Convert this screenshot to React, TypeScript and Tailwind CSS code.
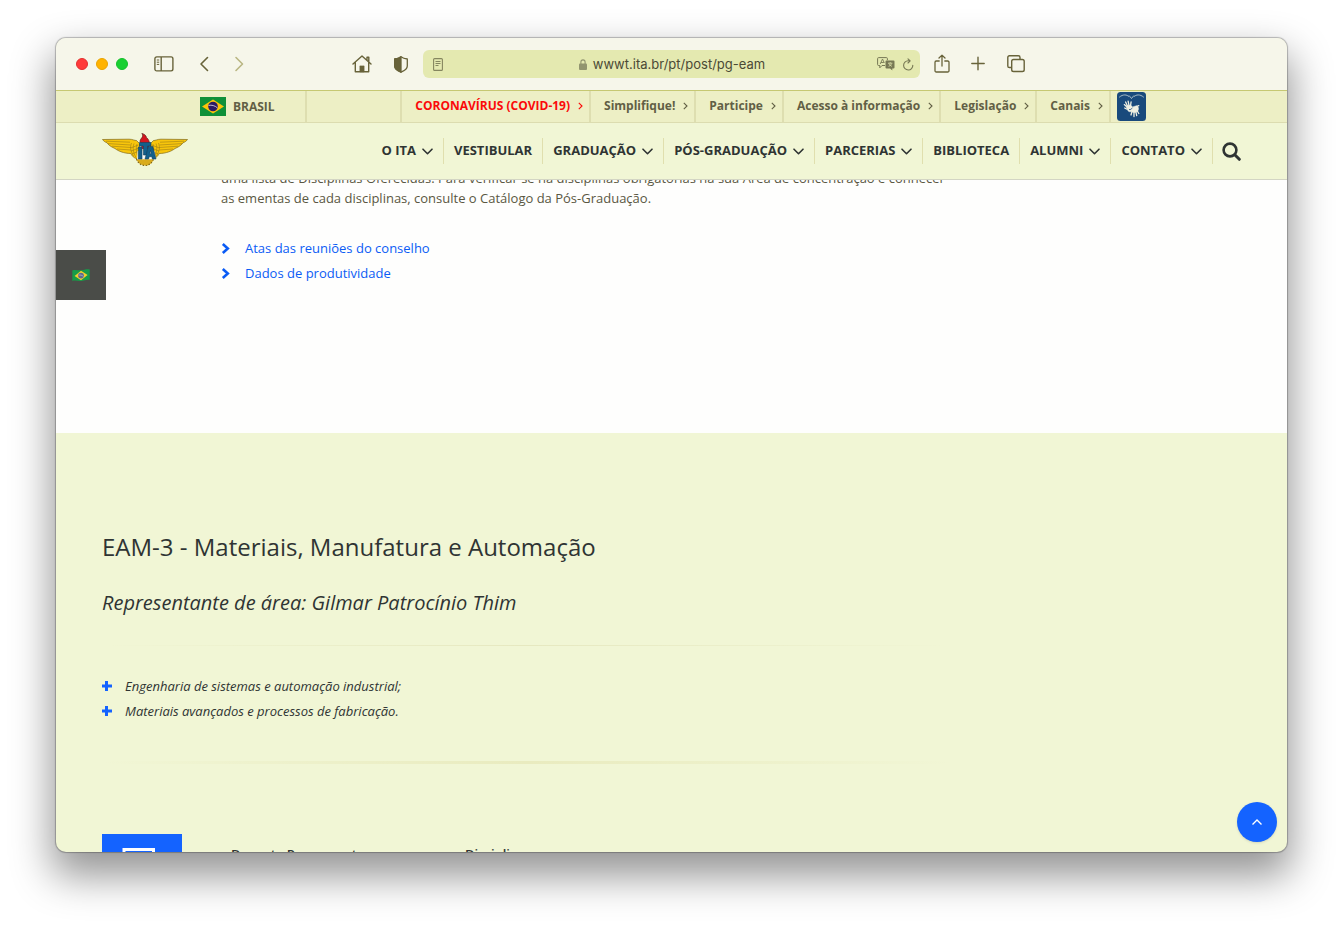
import React from "react";

const govLinks = ["Simplifique!", "Participe", "Acesso à informação", "Legislação", "Canais"];

const navItems = [
  { label: "O ITA", menu: true },
  { label: "VESTIBULAR", menu: false },
  { label: "GRADUAÇÃO", menu: true },
  { label: "PÓS-GRADUAÇÃO", menu: true },
  { label: "PARCERIAS", menu: true },
  { label: "BIBLIOTECA", menu: false },
  { label: "ALUMNI", menu: true },
  { label: "CONTATO", menu: true },
];

function GovChevron() {
  return (
    <svg width="5" height="8" viewBox="0 0 5 8" fill="none" stroke="currentColor" strokeWidth="1.1" aria-hidden="true">
      <path d="M0.8 0.8 4 4 0.8 7.2" />
    </svg>
  );
}

function DownChevron() {
  return (
    <svg width="11" height="7" viewBox="0 0 11 7" fill="none" stroke="currentColor" strokeWidth="1.6" strokeLinecap="round" strokeLinejoin="round" aria-hidden="true">
      <path d="M1 1.2 5.5 5.7 10 1.2" />
    </svg>
  );
}

function BrazilFlag() {
  return (
    <svg width="26" height="19" viewBox="0 0 26 19" aria-hidden="true">
      <rect width="26" height="19" fill="#0f9038" />
      <path d="M13 2.5 24 9.5 13 16.5 2 9.5Z" fill="#fdc30a" />
      <circle cx="13" cy="9.5" r="4.8" fill="#2c1a63" />
      <path d="M8.6 8.4c3-.6 6.400 .2 8.700 2.400" stroke="#cfcbe0" strokeWidth="0.9" fill="none" />
    </svg>
  );
}

function WavingFlag() {
  return (
    <svg width="18" height="13" viewBox="0 0 18 13" aria-hidden="true">
      <path d="M0.3 1.5C3 .3 5.500 1.600 9 1.300S14.500 -.2 17.700 .6V11C15 10.300 12.500 11.900 9 12S3 11 .3 12Z" fill="#169c48" />
      <path d="M9 1.800 15.600 6 9 11.200 2.600 7Z" fill="#f3cf2c" />
      <circle cx="9" cy="6.600" r="2.900" fill="#5d6a90" />
      <path d="M6.600 6.200c1.600-.5 3.500 0 4.700 1.200" stroke="#c8cede" strokeWidth="0.6" fill="none" />
    </svg>
  );
}

function WingPair() {
  return (
    <g>
      <path d="M.5 6.500 27 6.200c4 0 5.500 1.500 7.500 1.300l3 3v15c-4 .8-7-1.500-8.700-5C22 20.500 16 18 13 15.500 9 14 6 11.500 5 9.800 3 9 1.500 8 .5 6.500Z" fill="#f8c50b" stroke="#80681a" strokeWidth="0.7" />
      <path d="M4 8.200 28 9.200M6 10.600 28.500 12M10 13.200 29 14.500M15 16 29 17M29.500 10c-1.500 4-1 8 2 13M32 10.500c-1.500 4-1 9 2 14M35 11c-1.200 5-.8 10 1.500 14M28.500 15l8-3M29 18l8-3M30 21l7-3" fill="none" stroke="#8a701a" strokeWidth="0.5" />
    </g>
  );
}

function ItaLogo() {
  return (
    <svg width="86" height="34" viewBox="0 0 86 34" role="img" aria-label="ITA">
      <path d="M33.500 24.500c2 5.500 5 7.500 9.500 8s7.500-2.500 9.500-8Z" fill="#d9ab1c" />
      <path d="M34.500 26c1.500 4 4.500 6.500 8.500 6.500s7-2.500 8.500-6.500" fill="none" stroke="#80681a" strokeWidth="1.200" strokeDasharray="1.400 1.600" />
      <WingPair />
      <g transform="translate(86 0) scale(-1 1)">
        <WingPair />
      </g>
      <path d="M35.500 18h17l1.500 8.300h-19Z" fill="#f7fbf8" />
      <path d="M38.800 10.500c-2-3 .6-4.900 1.500-6.400C41 2.900 40.600 1.300 39.800 .4c3.200.8 4.400 2.500 4.600 4 .9.600 2.900 2.600 3.300 6.600Z" fill="#d3161e" stroke="#5b211c" strokeWidth="0.7" />
      <path d="M39.300 12.500h8v3.500h-8Z" fill="#b31f2b" />
      <path d="M37.500 9.500H49v3.500h-3.400v9h-4.200v-9h-3.900Z" fill="#12608c" stroke="#17405a" strokeWidth="0.6" />
      <path d="M36.300 14h3.700v12h-3.700Z" fill="#12608c" stroke="#17405a" strokeWidth="0.6" />
      <path fillRule="evenodd" d="M46.300 13.500h4.500L54 26h-3.600l-.6-2.300h-2.600l-.6 2.300H43ZM48.500 17.500l-.7 3.300h1.400Z" fill="#12608c" stroke="#17405a" strokeWidth="0.6" />
    </svg>
  );
}

function LibrasIcon() {
  return (
    <svg width="29" height="29" viewBox="0 0 29 29" aria-hidden="true">
      <rect width="29" height="29" rx="3.500" fill="#194a7c" />
      <g fill="none" stroke="#c9d5d6" strokeWidth="0.8" strokeLinecap="round">
        <path d="M2.500 5c3.500-3 7.500-2.500 9.300-.5M26.500 5c-3.500-3-7.500-2.500-9.300-.5M12.300 3.800l2.200 2.700 2.200-2.700" />
      </g>
      <g fill="#eff0e2" stroke="#eff0e2" strokeLinecap="round">
        <path d="M9.500 14.500c2-2 5-1.500 6 .5l4-1.300c2 .5 2.500 3 1.500 5-1.500 2-5 2.500-6.500.8-2.500 1.300-5-1.500-5-5Z" strokeWidth="0.5" />
        <path d="M10 15 7.300 12.600M10.500 14 8.600 10M12 13.500l-.9-4.300M13.500 14l.6-4.200M9.500 17l-1.800-1M15 19.500l-1 3.500M17 20v4.500M18.800 19.500l.9 4.200M20 18.500l1.800 3M19.500 14.500l2.300-.8" fill="none" strokeWidth="1.300" />
      </g>
      <path d="M12 17.500c1.500.5 2.500-.5 3.500-1.800" stroke="#194a7c" strokeWidth="0.8" fill="none" />
    </svg>
  );
}

function BrowserToolbar() {
  return (
    <div className="grid shrink-0 grid-cols-[1fr_minmax(200px,497px)_1fr] items-center border-b border-[#c6c872] bg-[#f6f6ea] pt-3 pb-3 text-[#68633a]">
      <div className="flex items-center justify-between pr-[14px] pl-5">
        <div className="flex items-center">
          <div className="flex gap-2">
            <button aria-label="Fechar" className="size-3 rounded-full border border-[#e3302f] bg-[#ff3b3a]" />
            <button aria-label="Minimizar" className="size-3 rounded-full border border-[#eaa400] bg-[#ffb300]" />
            <button aria-label="Ampliar" className="size-3 rounded-full border border-[#15c02c] bg-[#19d032]" />
          </div>
          <button aria-label="Barra lateral" className="ml-[26px]">
            <svg width="20" height="16" viewBox="0 0 20 16" fill="none" stroke="currentColor" strokeWidth="1.400">
              <rect x="0.900" y="0.900" width="18" height="14" rx="1.800" />
              <path d="M7.200 1v14" />
              <path d="M2.800 4h2.400M2.800 6.200h2.400M2.800 8.400h2.400" strokeWidth="1" />
            </svg>
          </button>
          <button aria-label="Voltar" className="ml-[25px]">
            <svg width="11" height="16" viewBox="0 0 11 16" fill="none" stroke="currentColor" strokeWidth="1.600" strokeLinecap="round" strokeLinejoin="round">
              <path d="M8.500 1.500 2 8l6.500 6.500" />
            </svg>
          </button>
          <button aria-label="Avançar" className="ml-6 text-[#b9b683]">
            <svg width="11" height="16" viewBox="0 0 11 16" fill="none" stroke="currentColor" strokeWidth="1.600" strokeLinecap="round" strokeLinejoin="round">
              <path d="M2 1.500 8.500 8 2 14.500" />
            </svg>
          </button>
        </div>
        <div className="flex items-center gap-[21px]">
          <button aria-label="Início">
            <svg width="20" height="18" viewBox="0 0 20 18" fill="none" stroke="currentColor" strokeWidth="1.400" strokeLinecap="round" strokeLinejoin="round">
              <path d="M1 9 10 .9 19 9M3.300 7.500v9.200h13.400V7.500M15 5V2.200h1.800V6.500" />
              <path d="M7.900 16.500v-5.600h4.200v5.600Z" fill="currentColor" strokeWidth="0.600" />
            </svg>
          </button>
          <button aria-label="Relatório de privacidade">
            <svg width="16" height="17" viewBox="0 0 16 17" fill="none" stroke="currentColor" strokeWidth="1.300" strokeLinejoin="round">
              <path d="M8 .8c1.800 1.400 4 2 6.300 2.200v7c0 2.800-3 4.800-6.300 6.200C4.700 14.800 1.700 12.800 1.700 10V3C4 2.800 6.200 2.200 8 .8Z" />
              <path d="M8 .8v15.400C4.700 14.800 1.700 12.800 1.700 10V3C4 2.800 6.200 2.200 8 .8Z" fill="currentColor" />
            </svg>
          </button>
        </div>
      </div>

      <div className="flex h-7 items-center rounded-md bg-[#e4e9b0] pr-[6px] pl-[10px] font-['Inter',sans-serif] text-[13px] text-[#4b4a35]">
        <svg width="10" height="13" viewBox="0 0 10 13" fill="none" stroke="#85865f" strokeWidth="1.100" aria-hidden="true">
          <rect x="0.600" y="0.600" width="8.800" height="11.800" rx="1" />
          <path d="M2.500 3.500h5M2.500 5.500h5M2.500 7.500h3" />
        </svg>
        <div className="flex flex-1 items-center justify-center gap-[6px] pt-px pl-6">
          <svg width="8" height="11" viewBox="0 0 8 11" aria-hidden="true">
            <path d="M1.900 5V3a2.100 2.100 0 0 1 4.200 0v2" fill="none" stroke="#92956f" strokeWidth="1.100" />
            <rect y="4.600" width="8" height="6.400" rx="1" fill="#92956f" />
          </svg>
          <span>wwwt.ita.br/pt/post/pg-eam</span>
        </div>
        <div className="flex items-center gap-2 text-[#777854]">
          <svg width="18" height="14" viewBox="0 0 18 14" fill="none" stroke="currentColor" aria-hidden="true">
            <path d="M8 8.500H5L2.800 10.800V8.500H1.600A1 1 0 0 1 .6 7.500V1.600a1 1 0 0 1 1-1h7.800a1 1 0 0 1 1 1v1.600" />
            <path d="M3.200 7 5.500 2l1.800 4M4 5.500h2.800" strokeWidth="0.900" />
            <path d="M9.500 3.600h7a1 1 0 0 1 1 1v5.800a1 1 0 0 1-1 1h-1.200v2.200l-2.200-2.200H9.500a1 1 0 0 1-1-1V4.600a1 1 0 0 1 1-1Z" fill="currentColor" stroke="none" />
            <path d="M11 6.200h4.400M13.200 5.200v1M12 6.700c.4 1.200 1.600 2 2.800 2.600M14.500 6.700c-.4 1.200-1.600 2-2.900 2.600" stroke="#e4e9b0" strokeWidth="0.800" />
          </svg>
          <button aria-label="Recarregar">
            <svg width="11" height="13" viewBox="0 0 11 13" fill="none" stroke="currentColor" strokeWidth="1.100" strokeLinecap="round" strokeLinejoin="round">
              <path d="M9.800 7.200A4.600 4.600 0 1 1 5.200 2.800h1.500M5 .8l2.200 2L5 5" />
            </svg>
          </button>
        </div>
      </div>

      <div className="flex items-center gap-5 pl-[14px]">
        <button aria-label="Compartilhar" className="pb-px">
          <svg width="16" height="20" viewBox="0 0 16 20" fill="none" stroke="currentColor" strokeWidth="1.300" strokeLinecap="round" strokeLinejoin="round">
            <path d="M5.200 7H2.200A1.200 1.200 0 0 0 1 8.200v8.600A1.200 1.200 0 0 0 2.200 18h11.600a1.200 1.200 0 0 0 1.200-1.200V8.200A1.200 1.200 0 0 0 13.800 7h-3M8 12V1.200M5 4l3-2.900L11 4" />
          </svg>
        </button>
        <button aria-label="Nova aba">
          <svg width="16" height="16" viewBox="0 0 16 16" fill="none" stroke="currentColor" strokeWidth="1.400" strokeLinecap="round">
            <path d="M8 1.300v12.400M1.800 7.500h12.400" />
          </svg>
        </button>
        <button aria-label="Visão geral das abas">
          <svg width="20" height="18" viewBox="0 0 20 18" fill="none" stroke="currentColor" strokeWidth="1.400" strokeLinejoin="round">
            <rect x="5.700" y="4.500" width="12.500" height="12" rx="1.800" />
            <path d="M5.500 12.500H3.400A1.600 1.600 0 0 1 1.800 10.900V2.400A1.600 1.600 0 0 1 3.400 .8h9a1.600 1.600 0 0 1 1.600 1.600v2" />
          </svg>
        </button>
      </div>
    </div>
  );
}

function GovernmentBar() {
  return (
    <div className="flex h-8 shrink-0 justify-between border-b border-[#dcdcb0] bg-[#edefc5] pr-[141px] pl-36 text-xs font-bold whitespace-nowrap text-[#625f45]">
      <a href="#brasil" className="flex items-center gap-[7px] border-r-2 border-[#dedeb0] pr-[30px]">
        <BrazilFlag />
        BRASIL
      </a>
      <div className="flex">
        <a href="#covid" className="flex items-center gap-2 border-l-2 border-[#dedeb0] pr-[6px] pb-[2px] pl-[13px] text-[#fb0a0a]">
          CORONAVÍRUS (COVID-19)
          <GovChevron />
        </a>
        {govLinks.map((label) => (
          <a key={label} href="#gov" className="flex items-center gap-2 border-l-2 border-[#dedeb0] pr-[6px] pb-[2px] pl-[13px]">
            {label}
            <GovChevron />
          </a>
        ))}
        <a href="#libras" aria-label="VLibras" className="flex items-center border-l-2 border-[#dedeb0] pl-[6px]">
          <LibrasIcon />
        </a>
      </div>
    </div>
  );
}

function SiteHeader() {
  return (
    <header className="z-10 flex h-[57px] shrink-0 items-center justify-between border-b border-[#d3d5c4] bg-[#f1f6d5] px-[46px] text-[#2f3433]">
      <a href="#inicio" className="pb-[2px]">
        <ItaLogo />
      </a>
      <nav className="flex items-center text-[13px] font-bold whitespace-nowrap">
        {navItems.map((item) => (
          <a key={item.label} href="#menu" className="flex h-[26px] items-center gap-[6px] border-r border-[#e0dfae] px-[10px]">
            {item.label}
            {item.menu && <DownChevron />}
          </a>
        ))}
        <button aria-label="Buscar" className="pl-[9px]">
          <svg width="19" height="19" viewBox="0 0 19 19" fill="none" stroke="currentColor" aria-hidden="true">
            <circle cx="8" cy="8" r="6.400" strokeWidth="2.600" />
            <path d="M12.800 12.800 17.300 17.300" strokeWidth="3" strokeLinecap="round" />
          </svg>
        </button>
      </nav>
    </header>
  );
}

function ListChevron() {
  return (
    <svg width="10" height="11" viewBox="0 0 10 11" fill="none" stroke="currentColor" strokeWidth="2.600" aria-hidden="true">
      <path d="M1.800 1 6.800 5.500 1.800 10" />
    </svg>
  );
}

function ListPlus() {
  return (
    <svg width="10" height="11" viewBox="0 0 10 11" fill="none" stroke="#1463ff" strokeWidth="3" aria-hidden="true">
      <path d="M4.500 0v10M0 5h10" />
    </svg>
  );
}

export default function App() {
  return (
    <div className="h-screen bg-white px-14 pt-[38px] pb-[74px] font-['Open_Sans',sans-serif]">
      <div className="relative flex h-full flex-col overflow-hidden rounded-[10px] bg-[#f1f6d5] shadow-[0_0_1px_1px_rgba(0,0,0,0.25),0_20px_40px_4px_rgba(0,0,0,0.42)]">
        <BrowserToolbar />
        <GovernmentBar />
        <SiteHeader />
        <main className="min-h-0 flex-1 overflow-hidden">
          <section className="bg-[#fefefd] pb-[147px] pl-[165px] text-[13px]">
            <p className="-mt-3 max-w-[740px] leading-5 text-[#5a5742]">
              uma lista de Disciplinas Oferecidas. Para verificar se há disciplinas obrigatórias na sua Área de concentração e conhecer
              as ementas de cada disciplinas, consulte o Catálogo da Pós-Graduação.
            </p>
            <ul className="pt-7 leading-[25px] text-[#0b5cf5]">
              {["Atas das reuniões do conselho", "Dados de produtividade"].map((label) => (
                <li key={label}>
                  <a href="#documento" className="flex items-center gap-[14px]">
                    <ListChevron />
                    {label}
                  </a>
                </li>
              ))}
            </ul>
          </section>

          <section className="px-[46px] pt-[98px] text-[#2f3433]">
            <div className="max-w-[850px]">
              <h2 className="text-2xl leading-8">EAM-3 - Materiais, Manufatura e Automação</h2>
              <h3 className="mt-6 text-xl leading-8 italic">Representante de área: Gilmar Patrocínio Thim</h3>
              <div className="mt-[26px] h-px bg-linear-to-r from-transparent via-[#e6e8c0] to-transparent" />
              <ul className="mt-7 text-[13px] leading-[25px] italic">
                {["Engenharia de sistemas e automação industrial;", "Materiais avançados e processos de fabricação."].map((label) => (
                  <li key={label} className="flex items-center gap-[13px]">
                    <ListPlus />
                    {label}
                  </li>
                ))}
              </ul>
              <div className="mt-[37px] h-[3px] bg-linear-to-r from-transparent via-[#e9ebbf] to-transparent" />
            </div>
            <div className="mt-[70px] flex items-start">
              <div className="flex size-20 items-start justify-center bg-[#1463ff] pt-[14px]">
                <svg width="46" height="46" viewBox="0 0 46 46" fill="none" stroke="#ffffff" strokeWidth="3" aria-hidden="true">
                  <path d="M5 40V1.500h29.500V40" />
                  <path d="M0 40h42" />
                </svg>
              </div>
              <div className="grid grid-cols-[234px_1fr] pt-[10px] pl-[49px] text-[13px] leading-5 font-semibold">
                <a href="#docentes">Docente Permanente</a>
                <a href="#disciplinas">Disciplinas</a>
              </div>
            </div>
          </section>
        </main>

        <a href="#idioma" aria-label="Português" className="absolute top-[212px] left-0 flex size-[50px] items-center justify-center bg-[#4a4c48]">
          <WavingFlag />
        </a>
        <button aria-label="Voltar ao topo" className="absolute right-[10px] bottom-[10px] flex size-10 items-center justify-center rounded-full bg-[#1463ff] text-white shadow-sm">
          <svg width="11" height="7" viewBox="0 0 11 7" fill="none" stroke="currentColor" strokeWidth="1.400" aria-hidden="true">
            <path d="M.5 5.500 5 1l4.500 4.500" />
          </svg>
        </button>
      </div>
    </div>
  );
}
